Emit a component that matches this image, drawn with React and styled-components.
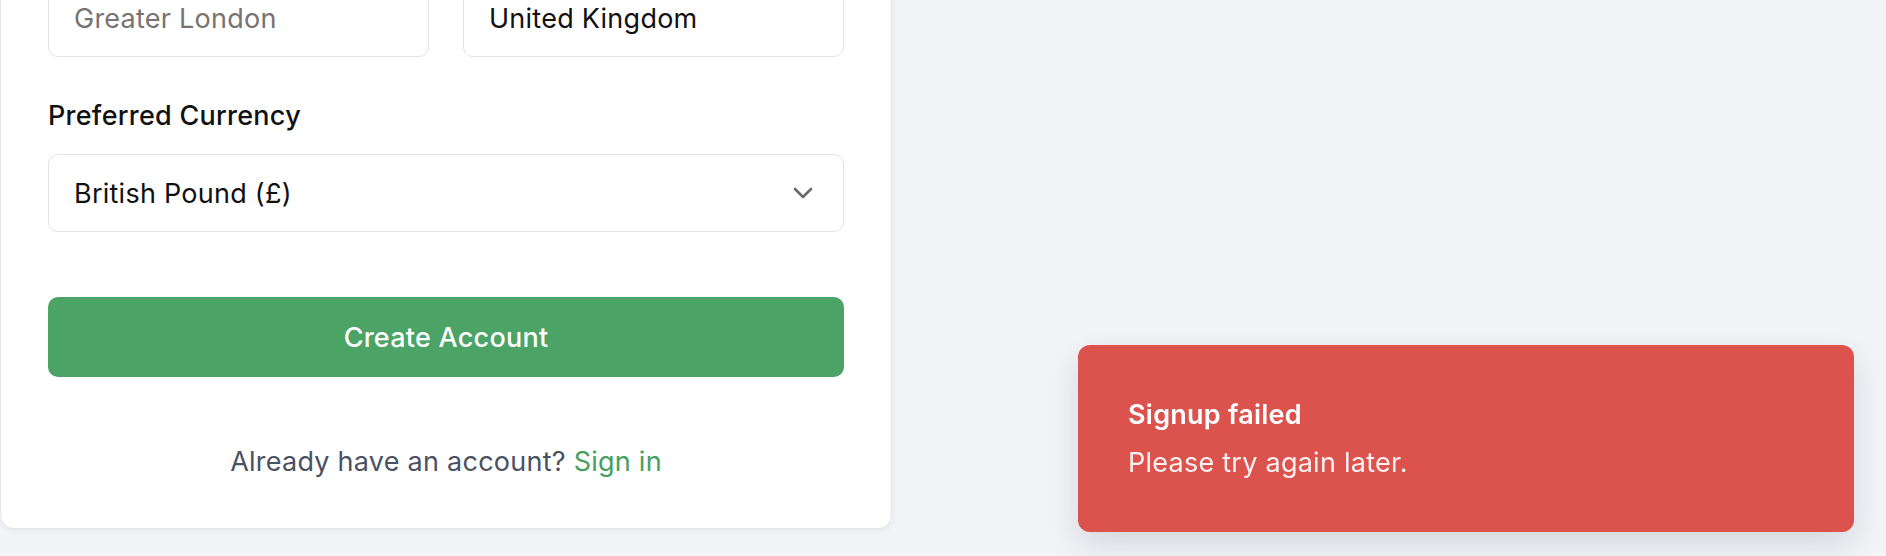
import React from "react"
import styled, { createGlobalStyle } from 'styled-components'

const GlobalStyle = createGlobalStyle`
    html, body {
        margin: 0;
        padding: 0;
        background-color: #f2f4f7;
        font-family: Inter, "Noto Sans", "Liberation Sans", sans-serif;
        letter-spacing: 0.25px;
    }
    * {
        box-sizing: border-box;
    }
`

export default function App() {
    return (
        <>
            <GlobalStyle />
            <Page>
                <Card>
                    <Row>
                        <Input placeholder="Greater London" />
                        <Input defaultValue="United Kingdom" />
                    </Row>

                    <Label>Preferred Currency</Label>
                    <Select>
                        <span>British Pound (£)</span>
                        <svg width="20" height="12" viewBox="0 0 20 12" fill="none">
                            <polyline points="2,2 10,10 18,2" stroke="#6b6b6b" strokeWidth="2.6" strokeLinecap="round" strokeLinejoin="round" />
                        </svg>
                    </Select>

                    <SubmitButton>Create Account</SubmitButton>

                    <Footer>
                        Already have an account? <SignIn href="#">Sign in</SignIn>
                    </Footer>
                </Card>
            </Page>

            <Toast>
                <ToastTitle>Signup failed</ToastTitle>
                <ToastBody>Please try again later.</ToastBody>
            </Toast>
        </>
    )
}

const Page = styled.div`
    height: 100vh;
    overflow: hidden;
    display: flex;
    align-items: flex-end;
    padding-bottom: 27px;
`

const Card = styled.div`
    width: 892px;
    flex-shrink: 0;
    background-color: #ffffff;
    border: 1px solid #e6e7ea;
    border-radius: 14px;
    box-shadow: 0 2px 6px rgba(15, 23, 42, 0.06);
    padding: 0 47px 48px;
    display: flex;
    flex-direction: column;
`

const Row = styled.div`
    display: grid;
    grid-template-columns: 1fr 1fr;
    gap: 34px;
    margin-bottom: 41px;
`

const Label = styled.label`
    font-size: 27px;
    line-height: 36px;
    font-weight: 500;
    color: #111111;
    margin-bottom: 20px;
`

const Input = styled.input`
    height: 78px;
    width: 100%;
    border: 1.5px solid #e3e3e3;
    border-radius: 10px;
    padding: 0 25px;
    font-family: inherit;
    letter-spacing: inherit;
    font-size: 27px;
    color: #111111;
    outline: none;

    &::placeholder {
        color: #78736f;
    }
`

const Select = styled.div`
    height: 78px;
    border: 1.5px solid #e3e3e3;
    border-radius: 10px;
    padding: 0 30px 0 25px;
    display: flex;
    align-items: center;
    justify-content: space-between;
    font-size: 27px;
    color: #111111;
`

const SubmitButton = styled.button`
    margin-top: 65px;
    height: 80px;
    width: 100%;
    border: none;
    border-radius: 10px;
    background-color: #4ba365;
    color: #ffffff;
    font-family: inherit;
    letter-spacing: inherit;
    font-size: 27px;
    font-weight: 500;
    cursor: pointer;
`

const Footer = styled.p`
    margin: 67px 0 0;
    text-align: center;
    font-size: 27px;
    line-height: 36px;
    color: #4a5162;
`

const SignIn = styled.a`
    color: #45a05f;
    text-decoration: none;
`

const Toast = styled.div`
    position: fixed;
    right: 32px;
    bottom: 24px;
    width: 776px;
    height: 187px;
    background-color: #dc524d;
    border-radius: 12px;
    box-shadow: 0 12px 32px rgba(30, 41, 59, 0.14);
    padding: 52px 50px;
    display: flex;
    flex-direction: column;
    gap: 12px;
`

const ToastTitle = styled.div`
    font-size: 27px;
    line-height: 36px;
    font-weight: 600;
    color: #ffffff;
`

const ToastBody = styled.div`
    font-size: 27px;
    line-height: 36px;
    color: rgba(255, 255, 255, 0.92);
`
